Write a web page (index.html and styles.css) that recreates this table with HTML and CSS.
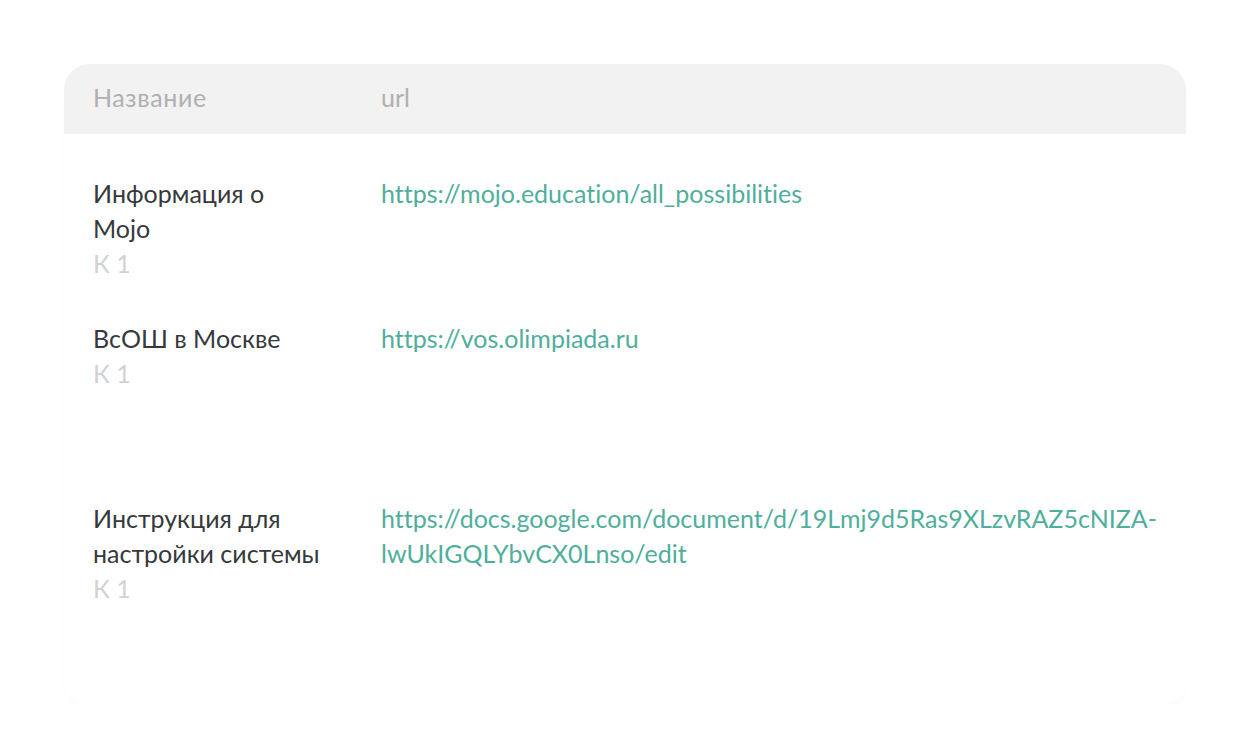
FILE: index.html
```html
<!DOCTYPE html>
<html lang="ru">
<head>
<meta charset="utf-8">
<title>Ссылки</title>
<link rel="stylesheet" href="styles.css">
</head>
<body>
<div class="card">
  <div class="head">
    <div class="col-name">Название</div>
    <div class="col-url">url</div>
  </div>
  <div class="rows">
    <div class="row">
      <div class="col-name">
        <div class="title">Информация о<br>Mojo</div>
        <div class="sub">К 1</div>
      </div>
      <div class="col-url"><a class="link" href="#">https://mojo.education/all_possibilities</a></div>
    </div>
    <div class="row row--tall">
      <div class="col-name">
        <div class="title">ВсОШ в Москве</div>
        <div class="sub">К 1</div>
      </div>
      <div class="col-url"><a class="link" href="#">https://vos.olimpiada.ru</a></div>
    </div>
    <div class="row">
      <div class="col-name">
        <div class="title">Инструкция для<br>настройки системы</div>
        <div class="sub">К 1</div>
      </div>
      <div class="col-url"><a class="link" href="#">https://docs.google.com/document/d/19Lmj9d5Ras9XLzvRAZ5cNIZA-<br>lwUkIGQLYbvCX0Lnso/edit</a></div>
    </div>
  </div>
</div>
</body>
</html>
```
FILE: styles.css
```css
html, body {
  margin: 0;
  padding: 0;
  background: #ffffff;
}
body {
  font-family: "Lato", "Open Sans", sans-serif;
  font-size: 25px;
  line-height: 35px;
  color: #36393c;
  font-variant-ligatures: none;
}
.card {
  margin: 64px 0 0 64px;
  width: 1122px;
  border-radius: 26px 26px 22px 22px;
  background: #ffffff;
  box-shadow: 0 10px 14px -6px rgba(0, 0, 0, 0.03);
  padding-bottom: 78px;
}
.head {
  display: flex;
  align-items: center;
  height: 70px;
  padding: 0 29px 4px;
  box-sizing: border-box;
  background: #f2f2f2;
  border-radius: 26px 26px 0 0;
  color: #b0b0b0;
}
.head .col-name {
  letter-spacing: 0.6px;
}
.col-name {
  width: 288px;
  flex: none;
}
.col-url {
  flex: 1;
}
.rows {
  padding-top: 22px;
}
.row {
  display: flex;
  padding: 20px 29px;
}
.row--tall {
  min-height: 140px;
}
.sub {
  color: #d2d2d2;
}
.link {
  color: #50ae9c;
  text-decoration: none;
}
```
